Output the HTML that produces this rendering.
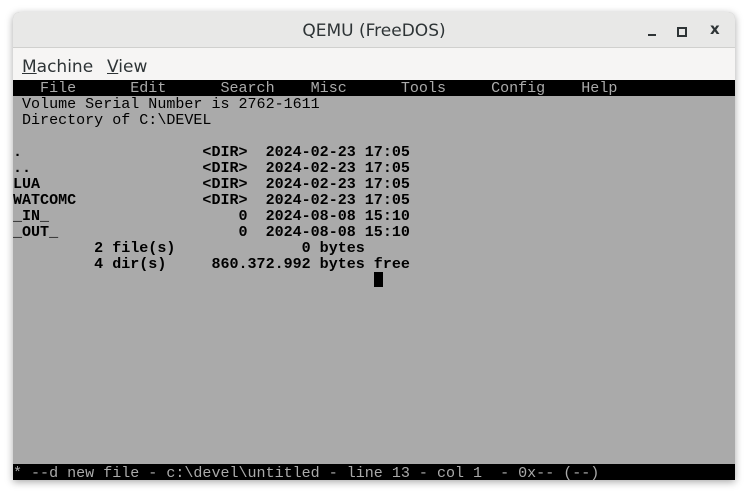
<!DOCTYPE html>
<html><head><style>
html,body{margin:0;padding:0;background:#fff;width:748px;height:497px;overflow:hidden}
.win{position:absolute;left:13px;top:12px;width:722px;height:468px;border-radius:7px 7px 0 0;box-shadow:0 2px 8px rgba(0,0,0,.35);overflow:hidden;background:#aaa}
.title{position:absolute;left:0;top:0;width:722px;height:35px;background:#e8e8e7;border-bottom:1px solid #d0d0ce;font:17px "DejaVu Sans","Liberation Sans",sans-serif;color:#2e3436}
.title .t{position:absolute;left:0;width:722px;text-align:center;top:9px}
.menu{position:absolute;left:0;top:36px;width:722px;height:32px;background:#f6f5f4;font:17px "DejaVu Sans","Liberation Sans",sans-serif;color:#2e3436}
.menu span{position:absolute;top:9px}
.scr{position:absolute;left:0;top:68px;width:722px;height:400px;background:#aaa}
pre{margin:0;position:absolute;left:0;font-family:"Liberation Mono","DejaVu Sans Mono",monospace;font-size:15.04px;line-height:16px;white-space:pre}
.bar{position:absolute;left:0;width:722px;height:16px;background:#000}
</style></head><body>
<div class="win">
 <div class="title"><div class="t">QEMU (FreeDOS)</div>
  <div style="position:absolute;left:635px;top:22px;width:8px;height:2px;background:#2e3436"></div>
  <div style="position:absolute;left:664px;top:15px;width:6px;height:6px;border:2px solid #2e3436"></div>
  <div style="position:absolute;left:697px;top:8px;font-size:15px;font-weight:bold">x</div>
 </div>
 <div class="menu"><span style="left:9px"><u>M</u>achine</span><span style="left:94px"><u>V</u>iew</span></div>
 <div class="scr">
  <div class="bar" style="top:0"></div>
  <pre style="top:0;color:#aaa">   File      Edit      Search    Misc      Tools     Config    Help</pre>
  <pre style="top:16px;color:#000"> Volume Serial Number is 2762-1611
 Directory of C:\DEVEL</pre>
  <pre style="top:64px;color:#000;font-weight:bold">.                    &lt;DIR&gt;  2024-02-23 17:05
..                   &lt;DIR&gt;  2024-02-23 17:05
LUA                  &lt;DIR&gt;  2024-02-23 17:05
WATCOMC              &lt;DIR&gt;  2024-02-23 17:05
_IN_                     0  2024-08-08 15:10
_OUT_                    0  2024-08-08 15:10
         2 file(s)              0 bytes
         4 dir(s)     860.372.992 bytes free</pre>
  <div style="position:absolute;left:361px;top:192px;width:9px;height:15px;background:#000"></div>
  <div class="bar" style="top:384px"></div>
  <pre style="top:385px;color:#aaa">* --d new file - c:\devel\untitled - line 13 - col 1  - 0x-- (--)</pre>
 </div>
</div>
</body></html>
